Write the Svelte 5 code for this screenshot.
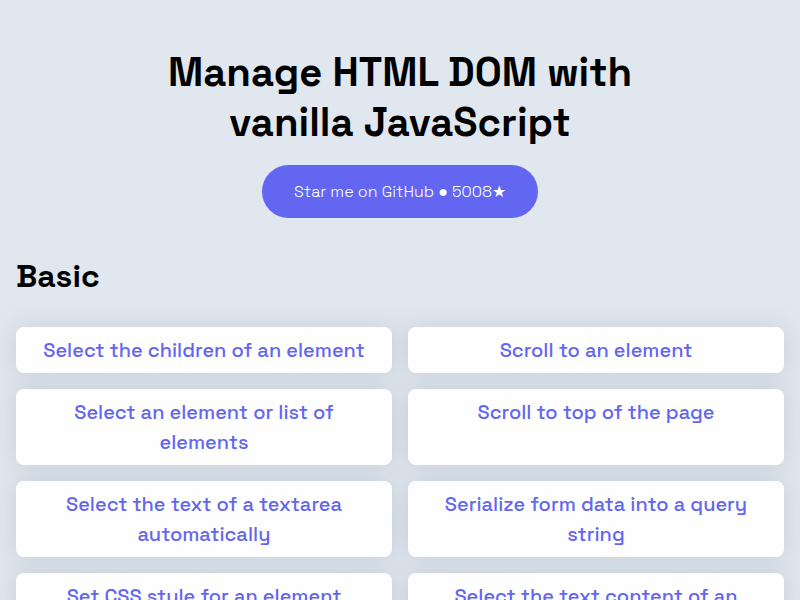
<script>
  const topics = [
    'Select the children of an element',
    'Scroll to an element',
    'Select an element or list of elements',
    'Scroll to top of the page',
    'Select the text of a textarea automatically',
    'Serialize form data into a query string',
    'Set CSS style for an element',
    'Select the text content of an element',
  ];
</script>

<div class="page">
  <header>
    <h1>Manage HTML DOM with vanilla JavaScript</h1>
    <a class="star" href="#github">Star me on GitHub ● 5008★</a>
  </header>
  <main id="github">
    <h2>Basic</h2>
    <ul>
      {#each topics as topic}
        <li><a href="#topic">{topic}</a></li>
      {/each}
    </ul>
  </main>
</div>

<style>
  :global(body) {
    margin: 0;
    background: #e1e7ef;
  }
  .page {
    padding: 48px 16px 16px;
    font-family: "Space Grotesk", "Liberation Sans", "DejaVu Sans", sans-serif;
    color: #000;
  }
  header {
    display: flex;
    flex-direction: column;
    align-items: center;
  }
  h1 {
    max-width: 512px;
    margin: 0 0 17px;
    font-size: 40px;
    line-height: 50px;
    font-weight: 600;
    text-align: center;
  }
  .star {
    padding: 14px 32px;
    border-radius: 27px;
    background: #6366f1;
    color: #fff;
    font-size: 16px;
    line-height: 25px;
    font-weight: 300;
    text-decoration: none;
    white-space: nowrap;
  }
  h2 {
    margin: 38px 0 30px;
    font-size: 32px;
    line-height: 41px;
    font-weight: 600;
  }
  ul {
    display: grid;
    grid-template-columns: 1fr 1fr;
    gap: 16px;
    margin: 0;
    padding: 0;
    list-style: none;
  }
  li {
    display: flex;
    border-radius: 8px;
    box-shadow: 0 0 24px #8496a44d;
  }
  li a {
    position: relative;
    flex: 1;
    padding: 8px 16px;
    border-radius: 8px;
    background: #fefefe;
    color: #6366f1;
    font-size: 20px;
    line-height: 30px;
    font-weight: 500;
    text-align: center;
    text-decoration: none;
  }
</style>
